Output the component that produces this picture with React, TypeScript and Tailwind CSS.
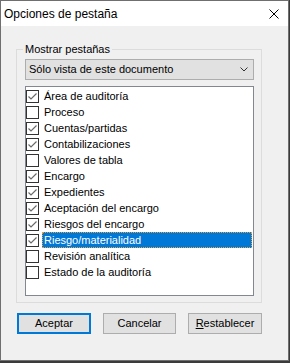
import React from "react";

const items: { label: string; checked: boolean }[] = [
  { label: "Área de auditoría", checked: true },
  { label: "Proceso", checked: false },
  { label: "Cuentas/partidas", checked: true },
  { label: "Contabilizaciones", checked: true },
  { label: "Valores de tabla", checked: false },
  { label: "Encargo", checked: true },
  { label: "Expedientes", checked: true },
  { label: "Aceptación del encargo", checked: true },
  { label: "Riesgos del encargo", checked: true },
  { label: "Riesgo/materialidad", checked: true },
  { label: "Revisión analítica", checked: false },
  { label: "Estado de la auditoría", checked: false },
];

function Box({ checked }: { checked: boolean }) {
  return (
    <svg width="13" height="13" viewBox="0 0 13 13" className="shrink-0">
      <rect x="0.5" y="0.5" width="12" height="12" fill="#fff" stroke="#333" />
      {checked && (
        <polyline
          points="2.5,6.5 5,9 10.5,3.5"
          fill="none"
          stroke="#6a6a6a"
          strokeWidth="1.2"
        />
      )}
    </svg>
  );
}

export default function App() {
  return (
    <div
      className="w-[290px] h-[363px] bg-[#3b3b3b] text-black"
      style={{ fontFamily: '"Liberation Sans", Arial, sans-serif' }}
    >
      <div className="w-[289px] h-[361px] border border-[#6f6f6f] bg-[#f0f0f0] flex flex-col">
        <div className="h-[25px] bg-white flex items-center justify-between pl-[3px] pr-[9px]">
          <span className="text-[12px] leading-[14px]">Opciones de pestaña</span>
          <svg width="10" height="10" viewBox="0 0 10 10">
            <path d="M0.5 0.5 L9.5 9.5 M9.5 0.5 L0.5 9.5" stroke="#000" strokeWidth="1" />
          </svg>
        </div>
        <div className="relative ml-[15px] mt-[23px] w-[246px] h-[254px] border border-[#dcdcdc] flex flex-col">
          <span className="absolute left-[6px] top-[-7px] px-[2px] bg-[#f0f0f0] text-[11px] leading-[13px]">
            Mostrar pestañas
          </span>
          <div className="ml-[8px] mt-[9px] w-[229px] h-[21px] border border-[#adadad] bg-[#e1e1e1] flex items-center justify-between pl-[3px] pr-[5px] text-[11px]">
            <span>Sólo vista de este documento</span>
            <svg width="8" height="5" viewBox="0 0 8 5">
              <polyline points="0.5,0.5 4,4 7.5,0.5" fill="none" stroke="#333" strokeWidth="1" />
            </svg>
          </div>
          <div className="ml-[8px] mt-[6px] w-[229px] h-[210px] border border-[#828790] bg-white pt-[1px] flex flex-col">
            {items.map((it, i) => {
              const sel = it.label === "Riesgo/materialidad";
              return (
                <div key={i} className="h-[16px] flex items-center">
                  <Box checked={it.checked} />
                  <div
                    className={
                      sel
                        ? "ml-[3px] h-[16px] flex-1 mr-[1px] flex items-center pl-[2px] bg-[#0078d7] text-white outline-dotted outline-1 outline-[#f0a030] -outline-offset-1 text-[11px]"
                        : "ml-[3px] h-[16px] flex items-center pl-[2px] text-[11px]"
                    }
                  >
                    {it.label}
                  </div>
                </div>
              );
            })}
          </div>
        </div>
        <div className="ml-[16px] mt-[10px] flex gap-[12px] text-[11px]">
          <button className="w-[74px] h-[21px] border-2 border-[#0078d7] bg-[#e1e1e1] flex items-center justify-center">
            Aceptar
          </button>
          <button className="w-[73px] h-[21px] border border-[#adadad] bg-[#e1e1e1] flex items-center justify-center">
            Cancelar
          </button>
          <button className="w-[74px] h-[21px] border border-[#adadad] bg-[#e1e1e1] flex items-center justify-center">
            <span>
              <span className="underline">R</span>establecer
            </span>
          </button>
        </div>
      </div>
    </div>
  );
}
